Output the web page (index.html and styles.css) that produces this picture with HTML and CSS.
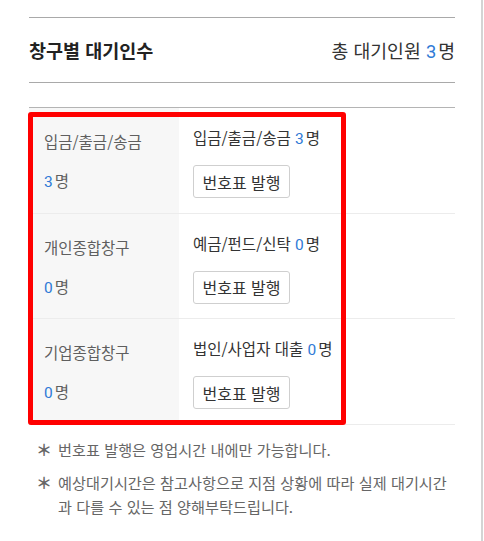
FILE: index.html
```html
<!DOCTYPE html>
<html lang="ko">
<head>
<meta charset="utf-8">
<link rel="stylesheet" href="styles.css">
</head>
<body>
<div class="page">
  <div class="content">
    <div class="header">
      <h2 class="title">창구별 대기인수</h2>
      <div class="total">총 대기인원 <span class="num">3</span>명</div>
    </div>
    <div class="table">
      <div class="row">
        <div class="cell-left">
          <div class="label">입금/출금/송금</div>
          <div class="count"><span class="num">3</span>명</div>
        </div>
        <div class="cell-right">
          <div class="desc">입금/출금/송금 <span class="num">3</span>명</div>
          <button class="btn">번호표 발행</button>
        </div>
      </div>
      <div class="row">
        <div class="cell-left">
          <div class="label">개인종합창구</div>
          <div class="count"><span class="num">0</span>명</div>
        </div>
        <div class="cell-right">
          <div class="desc">예금/펀드/신탁 <span class="num">0</span>명</div>
          <button class="btn">번호표 발행</button>
        </div>
      </div>
      <div class="row">
        <div class="cell-left">
          <div class="label">기업종합창구</div>
          <div class="count"><span class="num">0</span>명</div>
        </div>
        <div class="cell-right">
          <div class="desc">법인/사업자 대출 <span class="num">0</span>명</div>
          <button class="btn">번호표 발행</button>
        </div>
      </div>
      <div class="highlight"></div>
    </div>
    <ul class="notes">
      <li><span class="mark">＊</span><span class="note-text">번호표 발행은 영업시간 내에만 가능합니다.</span></li>
      <li><span class="mark">＊</span><span class="note-text">예상대기시간은 참고사항으로 지점 상황에 따라 실제 대기시간과 다를 수 있는 점 양해부탁드립니다.</span></li>
    </ul>
  </div>
</div>
</body>
</html>
```

FILE: styles.css
```css
* { box-sizing: border-box; }
html, body {
  margin: 0;
  padding: 0;
  background: #fff;
}
body {
  font-family: "Noto Sans CJK KR", "Noto Sans", sans-serif;
  color: #333;
}
.page {
  width: 483px;
  min-height: 541px;
  border-right: 2px solid #d4d4d4;
  padding-top: 17px;
}
.content {
  margin-left: 29px;
  width: 426px;
}
.header {
  display: flex;
  justify-content: space-between;
  align-items: center;
  height: 66px;
  border-top: 1px solid #a9a9a9;
  border-bottom: 1px solid #a9a9a9;
}
.title {
  margin: 0;
  font-size: 18.5px;
  font-weight: 700;
  color: #222;
}
.total {
  font-size: 18.3px;
  color: #333;
}
.num {
  font-family: Roboto, "Noto Sans CJK KR", sans-serif;
  line-height: 1;
  color: #2f7ad6;
  margin-right: 2px;
}
.table {
  position: relative;
  margin-top: 24px;
  border-top: 1px solid #b4b4b4;
}
.row {
  display: flex;
  height: 105.5px;
  border-bottom: 1px solid #ececec;
}
.cell-left {
  width: 150px;
  background: #f7f7f7;
  padding: 22px 0 0 15px;
  font-size: 15.5px;
  color: #5f5f5f;
}
.label {
  height: 22px;
  line-height: 22px;
}
.count {
  margin-top: 17px;
  height: 22px;
  line-height: 22px;
}
.cell-right {
  flex: 1;
  padding: 18px 0 0 14px;
  font-size: 15.5px;
  color: #333;
}
.desc {
  height: 22px;
  line-height: 22px;
}
.btn {
  display: block;
  margin-top: 17px;
  height: 33px;
  width: 97px;
  padding: 0;
  background: #fff;
  border: 1px solid #cfcfcf;
  border-radius: 3px;
  font-family: inherit;
  font-size: 16px;
  color: #333;
}
.highlight {
  position: absolute;
  left: -1px;
  top: 4px;
  width: 318px;
  height: 313px;
  border: 5px solid #ff0000;
  border-radius: 3px;
  pointer-events: none;
}
.notes {
  list-style: none;
  margin: 12px 0 0;
  padding: 0;
  font-size: 15.2px;
  color: #666;
  line-height: 24px;
}
.notes li {
  display: flex;
  margin-bottom: 9px;
}
.mark {
  width: 22px;
  margin-left: 7px;
  flex-shrink: 0;
  font-size: 16px;
  font-weight: 700;
  color: #666;
}
.note-text {
  flex: 1;
}
```
